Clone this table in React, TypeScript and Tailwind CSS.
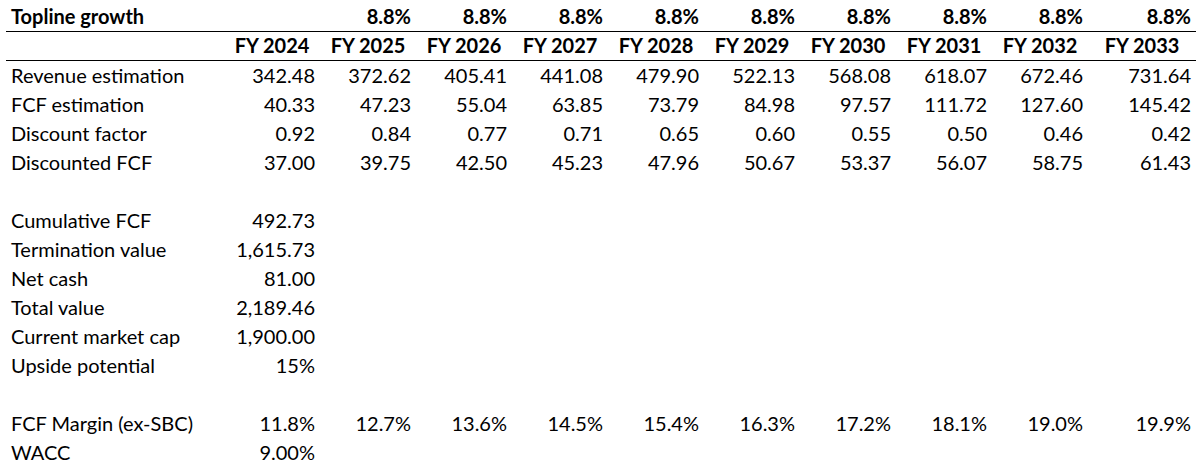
const years = ["FY 2024", "FY 2025", "FY 2026", "FY 2027", "FY 2028", "FY 2029", "FY 2030", "FY 2031", "FY 2032", "FY 2033"];

const rows: { label: string; values: string[] }[] = [
  { label: "Revenue estimation", values: ["342.48", "372.62", "405.41", "441.08", "479.90", "522.13", "568.08", "618.07", "672.46", "731.64"] },
  { label: "FCF estimation", values: ["40.33", "47.23", "55.04", "63.85", "73.79", "84.98", "97.57", "111.72", "127.60", "145.42"] },
  { label: "Discount factor", values: ["0.92", "0.84", "0.77", "0.71", "0.65", "0.60", "0.55", "0.50", "0.46", "0.42"] },
  { label: "Discounted FCF", values: ["37.00", "39.75", "42.50", "45.23", "47.96", "50.67", "53.37", "56.07", "58.75", "61.43"] },
  { label: "", values: [] },
  { label: "Cumulative FCF", values: ["492.73"] },
  { label: "Termination value", values: ["1,615.73"] },
  { label: "Net cash", values: ["81.00"] },
  { label: "Total value", values: ["2,189.46"] },
  { label: "Current market cap", values: ["1,900.00"] },
  { label: "Upside potential", values: ["15%"] },
  { label: "", values: [] },
  { label: "FCF Margin (ex-SBC)", values: ["11.8%", "12.7%", "13.6%", "14.5%", "15.4%", "16.3%", "17.2%", "18.1%", "19.0%", "19.9%"] },
  { label: "WACC", values: ["9.00%"] },
];

const grid = "grid grid-cols-[218px_repeat(9,96px)_108px] h-[29px] items-end pb-[5px]";

export default function App() {
  return (
    <div className="min-h-screen bg-white pt-[3px] pl-[6px] text-black font-['Lato','Liberation_Sans',sans-serif] text-[20px] leading-none">
      <div className="w-[1190px]">
        <div className={`${grid} border-b border-black font-bold`}>
          <div className="pl-[5px]">Topline growth</div>
          {years.map((y, i) => (
            <div key={y} className="text-right pr-[5px]">{i === 0 ? "" : "8.8%"}</div>
          ))}
        </div>
        <div className={`${grid} border-b border-black font-bold`}>
          <div />
          {years.map((y) => (
            <div key={y} className="text-center">{y}</div>
          ))}
        </div>
        {rows.map((r, ri) => (
          <div key={ri} className={grid}>
            <div className="pl-[5px]">{r.label}</div>
            {years.map((y, i) => (
              <div key={y} className="text-right pr-[5px]">{r.values[i] ?? ""}</div>
            ))}
          </div>
        ))}
      </div>
    </div>
  );
}
